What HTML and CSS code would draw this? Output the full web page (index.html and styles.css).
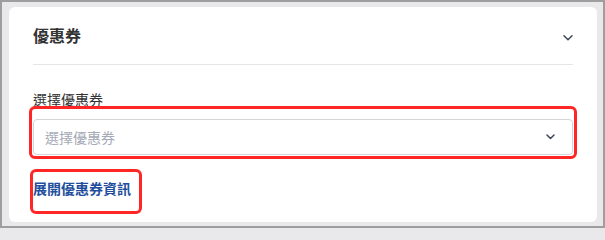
FILE: index.html
```html
<!DOCTYPE html>
<html lang="zh-Hant">
<head>
<meta charset="utf-8">
<title>優惠券</title>
<link rel="stylesheet" href="styles.css">
</head>
<body>
  <section class="card">
    <header class="card-header">
      <h2 class="card-title">優惠券</h2>
      <svg class="header-chevron" width="10" height="6" viewBox="0 0 10 6" aria-hidden="true">
        <path d="M1 0.8 L5 4.8 L9 0.8" fill="none" stroke="#3f4654" stroke-width="1.5" stroke-linecap="round" stroke-linejoin="round"/>
      </svg>
    </header>
    <div class="field">
      <label class="field-label">選擇優惠券</label>
      <div class="select annotated annotated-select">
        <span class="select-placeholder">選擇優惠券</span>
        <svg class="select-chevron" width="9" height="6" viewBox="0 0 9 6" aria-hidden="true">
          <path d="M1 1 L4.5 4.5 L8 1" fill="none" stroke="#3f4654" stroke-width="1.5" stroke-linecap="round" stroke-linejoin="round"/>
        </svg>
      </div>
    </div>
    <a class="expand-link annotated annotated-link" href="#">展開優惠券資訊</a>
  </section>
</body>
</html>
```
FILE: styles.css
```css
* { box-sizing: border-box; }
html, body { height: 100%; }
body {
  margin: 0;
  height: 228px;
  border: 2px solid #9e9e9e;
  background: #e9e9ec;
  padding: 5px 6px 4px 7px;
  display: flex;
  flex-direction: column;
  font-family: "Noto Sans CJK TC", "Noto Sans", sans-serif;
  color: #333;
}
.card {
  flex: 1;
  background: #fff;
  border-radius: 6px;
  padding: 0 24px;
  display: flex;
  flex-direction: column;
  align-items: flex-start;
}
.card-header {
  align-self: stretch;
  display: flex;
  justify-content: space-between;
  align-items: flex-start;
  padding: 16px 0 17px;
  border-bottom: 1px solid #e6e6e8;
}
.card-title {
  margin: 0;
  font-size: 16px;
  line-height: 24px;
  font-weight: 700;
  color: #333;
}
.header-chevron {
  display: block;
  margin-top: 11.5px;
}
.field {
  align-self: stretch;
  margin-top: 24px;
  display: flex;
  flex-direction: column;
}
.field-label {
  font-size: 14px;
  line-height: 20px;
  color: #333;
}
.select {
  margin-top: 10px;
  height: 36px;
  border: 1px solid #d4d4d8;
  border-radius: 4px;
  display: flex;
  align-items: center;
  justify-content: space-between;
  padding: 0 17px 0 11px;
}
.select-placeholder {
  font-size: 14px;
  line-height: 20px;
  color: #a4aab6;
}
.select-chevron { display: block; }
.expand-link {
  display: inline-block;
  margin-top: 23px;
  font-size: 14px;
  line-height: 20px;
  font-weight: 700;
  color: #1f4f9c;
  text-decoration: none;
}
.annotated { position: relative; }
.annotated::after {
  content: "";
  position: absolute;
  border: 3px solid #ff2626;
  border-radius: 6px;
  pointer-events: none;
}
.annotated-select::after {
  top: -14px;
  left: -5px;
  right: -5px;
  bottom: -5px;
}
.annotated-link::after {
  top: -9px;
  left: -3px;
  right: -11px;
  bottom: -16px;
}
```
